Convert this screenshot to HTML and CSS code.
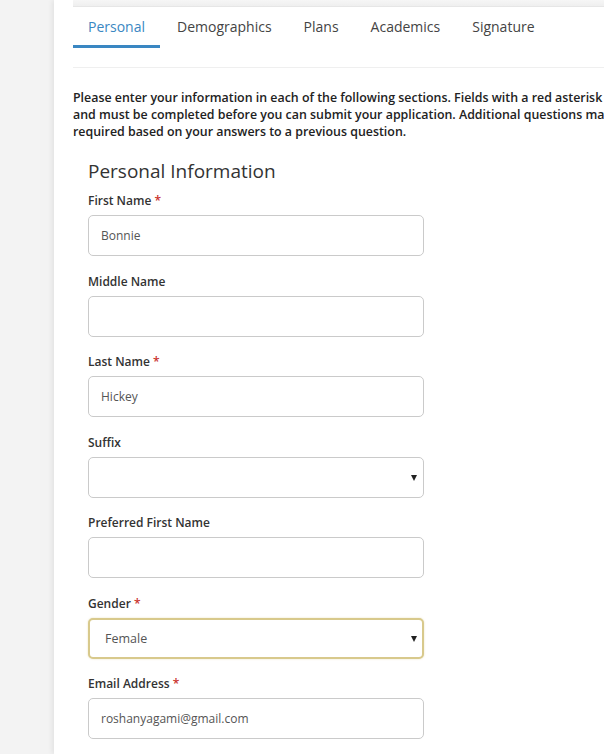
FILE: index.html
```html
<!DOCTYPE html>
<html lang="en">
<head>
  <meta charset="UTF-8">
  <title>Application - Personal</title>
  <link rel="stylesheet" href="styles.css">
</head>
<body>

  <div class="page">
    <div class="page-top"></div>

    <div class="content">
      <!-- Section tabs -->
      <nav class="tabs">
        <a class="tab active">Personal</a>
        <a class="tab">Demographics</a>
        <a class="tab">Plans</a>
        <a class="tab">Academics</a>
        <a class="tab">Signature</a>
      </nav>
      <div class="divider"></div>

      <p class="intro">Please enter your information in each of the following sections. Fields with a red asterisk are required and must be completed before you can submit your application. Additional questions may become required based on your answers to a previous question.</p>

      <form class="section">
        <h2>Personal Information</h2>

        <div class="field">
          <label>First Name <span class="req">*</span></label>
          <input type="text" value="Bonnie">
        </div>

        <div class="field">
          <label>Middle Name</label>
          <input type="text">
        </div>

        <div class="field">
          <label>Last Name <span class="req">*</span></label>
          <input type="text" value="Hickey">
        </div>

        <div class="field">
          <label>Suffix</label>
          <div class="select-wrap">
            <select><option></option></select>
          </div>
        </div>

        <div class="field">
          <label>Preferred First Name</label>
          <input type="text">
        </div>

        <div class="field">
          <label>Gender <span class="req">*</span></label>
          <div class="select-wrap">
            <select class="focused"><option>Female</option></select>
          </div>
        </div>

        <div class="field">
          <label>Email Address <span class="req">*</span></label>
          <input type="text" value="roshanyagami@gmail.com">
        </div>
      </form>
    </div>
  </div>

</body>
</html>
```

FILE: styles.css
```css
body {
  margin: 0;
  background: #f3f3f3;
  color: #333;
  font-family: "Open Sans", sans-serif;
  overflow: hidden;
}

.page {
  margin-left: 54px;
  width: 720px;
  min-height: 754px;
  background: #fff;
  box-shadow: -2px 0 5px rgba(0, 0, 0, 0.07);
}

.page-top {
  height: 6px;
  margin-left: 19px;
  background: linear-gradient(#f6f6f6, #efefef);
  border-bottom: 1px solid #e6e6e6;
}

.content {
  padding: 0 19px;
}

.tabs {
  display: flex;
}

.tab {
  padding: 10px 15px 8px;
  margin-right: 2px;
  font-size: 14px;
  line-height: 20px;
  color: #444;
  border-bottom: 3px solid transparent;
  cursor: pointer;
}

.tab.active {
  color: #3a87c2;
  border-bottom-color: #3a87c2;
}

.divider {
  margin-top: 19px;
  height: 1px;
  background: #efefef;
}

.intro {
  margin: 21px 0 0;
  width: 625px;
  font-size: 12.4px;
  font-weight: 600;
  line-height: 17px;
  color: #222;
}

.section {
  padding-left: 15px;
}

.section h2 {
  margin: 18px 0 0;
  font-size: 19px;
  font-weight: 400;
  line-height: 26px;
  color: #333;
}

.field {
  margin-top: 8px;
  margin-bottom: 16.5px;
}

.field label {
  display: block;
  margin-bottom: 6px;
  font-size: 12px;
  font-weight: 600;
  line-height: 17px;
  color: #333;
}

.req {
  color: #c9302c;
}

input,
select {
  box-sizing: border-box;
  width: 336px;
  height: 41px;
  padding: 0 12px;
  border: 1px solid #cacaca;
  border-radius: 5px;
  background: #fff;
  font-family: "Open Sans", sans-serif;
  font-size: 12px;
  color: #555;
  outline: none;
}

select {
  appearance: none;
  -webkit-appearance: none;
}

select.focused {
  border: 2px solid #d8c98c;
  padding-left: 15px;
  font-size: 12.5px;
  box-shadow: 0 0 2px rgba(216, 201, 140, 0.6);
}

.select-wrap {
  position: relative;
  width: 336px;
}

.select-wrap::after {
  content: "";
  position: absolute;
  right: 7px;
  top: 18px;
  border-left: 3px solid transparent;
  border-right: 3px solid transparent;
  border-top: 6px solid #222;
}
```
